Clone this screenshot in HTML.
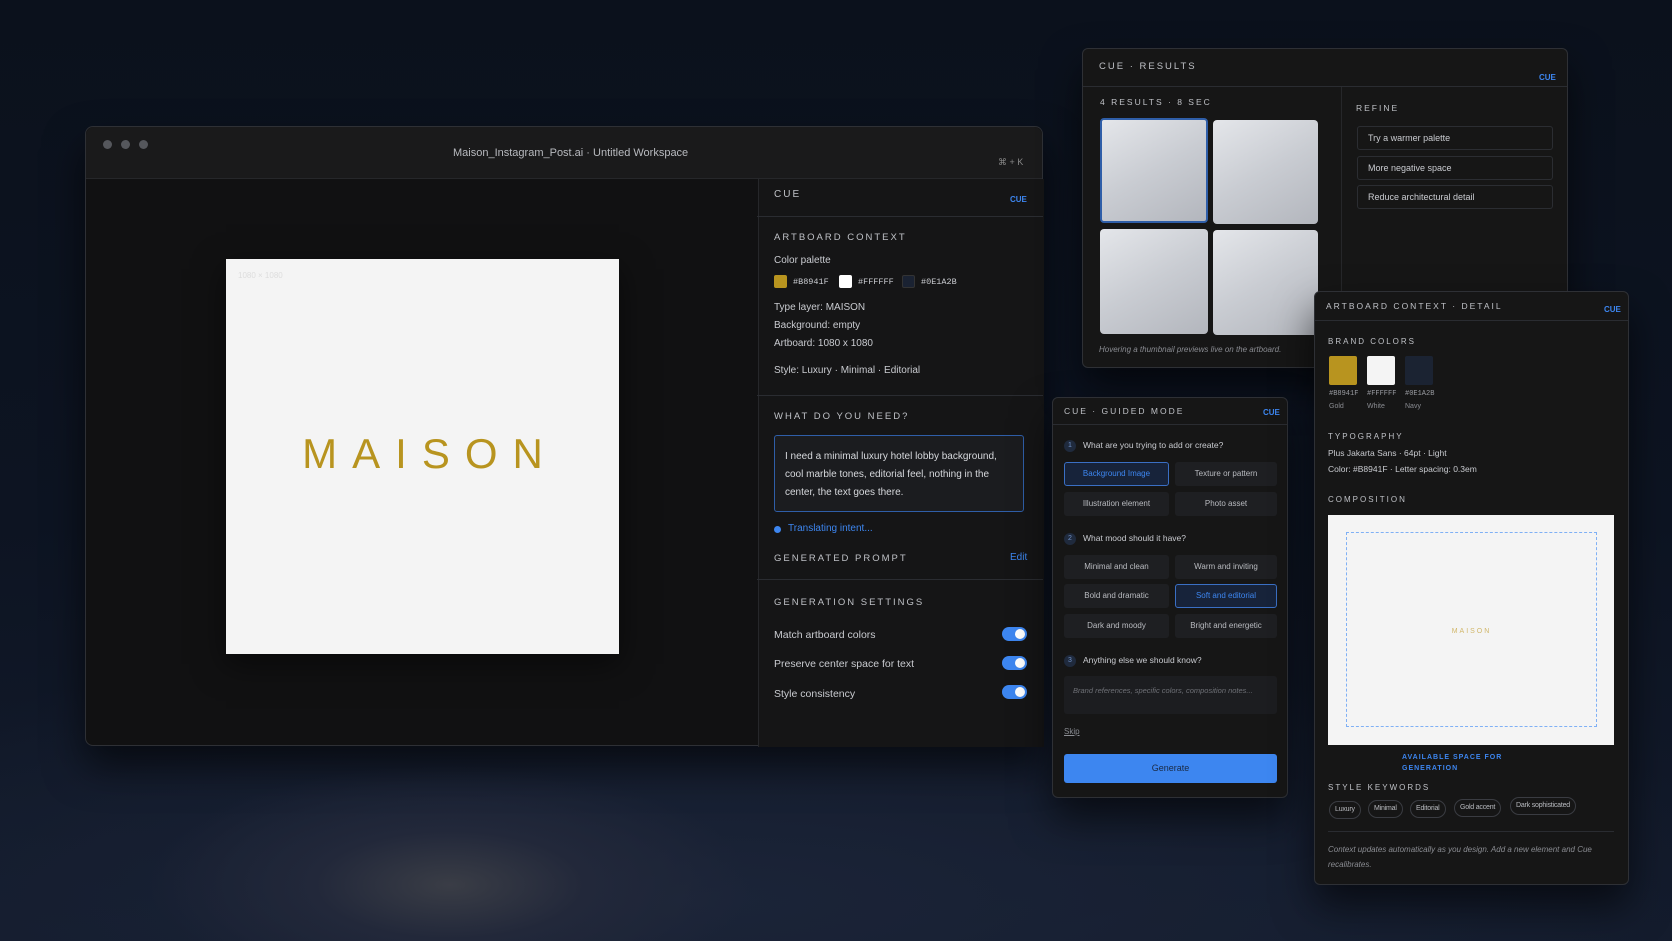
<!DOCTYPE html>
<html><head><meta charset="utf-8"><style>
*{box-sizing:border-box;margin:0;padding:0}
body{width:1672px;height:941px;overflow:hidden;position:relative;font-family:"Liberation Sans","DejaVu Sans",sans-serif;
background:radial-gradient(ellipse 300px 120px at 450px 885px,#3a3d46 0%,#22283a 45%,rgba(20,28,46,0) 100%),
radial-gradient(ellipse 1100px 260px at 700px 900px,#1b2438 0%,rgba(14,20,34,0) 100%),
linear-gradient(180deg,#0b111c 0%,#0d1422 55%,#131b2c 100%);}
.a{position:absolute}
.panel{position:absolute;background:#161616;border:1px solid #2e3035;border-radius:6px;box-shadow:0 20px 40px rgba(0,0,0,.6)}
.cap{position:absolute;font-size:10px;letter-spacing:2px;color:#bfc1c6}
.cue{position:absolute;font-size:8px;color:#3d86f0;font-weight:bold}
.t{position:absolute;font-size:10.5px;color:#c9cbd0;white-space:nowrap}
.hr{position:absolute;height:1px;background:#2a2c31}
.btn{position:absolute;background:#1e1f22;border-radius:3px;font-size:8px;color:#b9bbc0;text-align:center;line-height:23px}
.sel{background:#17233a;border:1px solid #3a6fc4;color:#3d86f0;line-height:21px}
.tog{position:absolute;width:25px;height:14px;border-radius:7px;background:#3d86f0}
.tog:after{content:"";position:absolute;right:2px;top:2px;width:10px;height:10px;border-radius:5px;background:#fff}
.thumb{position:absolute;border-radius:4px;background:linear-gradient(150deg,#e4e6ea 0%,#c9ccd2 50%,#b3b6bd 100%)}
.ref{position:absolute;left:1357px;width:196px;height:24px;border:1px solid #2b2d32;border-radius:3px;font-size:9px;color:#c9cbd0;padding-left:10px;line-height:22px}
.chip{position:absolute;top:800px;height:18px;border:1px solid #3a3c42;border-radius:9px;font-size:7px;color:#b9bbc0;line-height:16px;padding:0 5px;white-space:nowrap;letter-spacing:-0.2px}
.q{position:absolute;width:12px;height:12px;border-radius:6px;background:#1f2a3d;color:#6f8fc4;font-size:7px;text-align:center;line-height:12px}
</style></head><body>

<div class="panel" style="left:85px;top:126px;width:958px;height:620px;background:#111112;border-radius:8px">
  <div class="a" style="left:0;top:0;width:100%;height:52px;background:#1a1a1b;border-bottom:1px solid #26272a;border-radius:8px 8px 0 0"></div>
  <div class="a" style="left:17px;top:13px;width:9px;height:9px;border-radius:5px;background:#55575c"></div>
  <div class="a" style="left:35px;top:13px;width:9px;height:9px;border-radius:5px;background:#55575c"></div>
  <div class="a" style="left:53px;top:13px;width:9px;height:9px;border-radius:5px;background:#55575c"></div>
  <div class="t" style="left:367px;top:20px;color:#b8babf;font-size:11px">Maison_Instagram_Post.ai · Untitled Workspace</div>
  <div class="t" style="left:912px;top:30px;color:#888;font-size:9px">⌘ + K</div>
  <div class="a" style="left:672px;top:52px;width:1px;height:568px;background:#26272a"></div>
  <div class="a" style="left:673px;top:52px;width:285px;height:568px;background:#151516"></div>
</div>
<div class="a" style="left:226px;top:259px;width:393px;height:395px;background:#f4f4f4;box-shadow:0 10px 30px rgba(0,0,0,.5)"></div>
<div class="t" style="left:238px;top:271px;font-size:8px;color:#ddd">1080 × 1080</div>
<div class="a" style="left:226px;top:430px;width:393px;text-align:center;font-size:42px;letter-spacing:15px;color:#b8941f;padding-left:15px;font-weight:300">MAISON</div>

<div class="cap" style="left:774px;top:189px">CUE</div>
<div class="cue" style="left:1010px;top:195px">CUE</div>
<div class="hr" style="left:757px;top:216px;width:286px"></div>
<div class="cap" style="left:774px;top:232px;font-size:9.5px">ARTBOARD CONTEXT</div>
<div class="t" style="left:774px;top:255px;font-size:10px">Color palette</div>
<div class="a" style="left:774px;top:275px;width:13px;height:13px;background:#b8941f;border-radius:2px"></div>
<div class="t" style="left:793px;top:277px;font-size:8.5px;font-family:'Liberation Mono',monospace">#B8941F</div>
<div class="a" style="left:839px;top:275px;width:13px;height:13px;background:#fff;border-radius:2px"></div>
<div class="t" style="left:858px;top:277px;font-size:8.5px;font-family:'Liberation Mono',monospace">#FFFFFF</div>
<div class="a" style="left:902px;top:275px;width:13px;height:13px;background:#1a2232;border:1px solid #333;border-radius:2px"></div>
<div class="t" style="left:921px;top:277px;font-size:8.5px;font-family:'Liberation Mono',monospace">#0E1A2B</div>
<div class="t" style="left:774px;top:302px;font-size:10px">Type layer: MAISON</div>
<div class="t" style="left:774px;top:320px;font-size:10px">Background: empty</div>
<div class="t" style="left:774px;top:338px;font-size:10px">Artboard: 1080 x 1080</div>
<div class="t" style="left:774px;top:365px;font-size:10px">Style: Luxury · Minimal · Editorial</div>
<div class="hr" style="left:757px;top:395px;width:286px"></div>
<div class="cap" style="left:774px;top:411px;font-size:9.5px">WHAT DO YOU NEED?</div>
<div class="a" style="left:774px;top:435px;width:250px;height:77px;border:1px solid #2f5ea8;border-radius:3px;background:#1b1c1f;padding:12px 10px;font-size:10px;line-height:18px;color:#d7d9dd">I need a minimal luxury hotel lobby background, cool marble tones, editorial feel, nothing in the center, the text goes there.</div>
<div class="a" style="left:774px;top:526px;width:7px;height:7px;border-radius:4px;background:#3d86f0"></div>
<div class="t" style="left:788px;top:523px;color:#3d86f0;font-size:10px">Translating intent...</div>
<div class="cap" style="left:774px;top:553px;font-size:9.5px">GENERATED PROMPT</div>
<div class="t" style="left:1010px;top:552px;color:#3d86f0;font-size:10px">Edit</div>
<div class="hr" style="left:757px;top:579px;width:286px"></div>
<div class="cap" style="left:774px;top:597px;font-size:9.5px">GENERATION SETTINGS</div>
<div class="t" style="left:774px;top:629px">Match artboard colors</div><div class="tog" style="left:1002px;top:627px"></div>
<div class="t" style="left:774px;top:658px">Preserve center space for text</div><div class="tog" style="left:1002px;top:656px"></div>
<div class="t" style="left:774px;top:688px">Style consistency</div><div class="tog" style="left:1002px;top:685px"></div>

<div class="panel" style="left:1082px;top:48px;width:486px;height:320px"></div>
<div class="cap" style="left:1099px;top:61px;font-size:9.5px">CUE · RESULTS</div>
<div class="cue" style="left:1539px;top:73px">CUE</div>
<div class="hr" style="left:1083px;top:86px;width:484px"></div>
<div class="a" style="left:1341px;top:87px;width:1px;height:280px;background:#26272a"></div>
<div class="cap" style="left:1100px;top:97px;font-size:8.5px">4 RESULTS · 8 SEC</div>
<div class="cap" style="left:1356px;top:103px;font-size:8.5px">REFINE</div>
<div class="thumb" style="left:1100px;top:118px;width:108px;height:105px;border:2px solid #2f5ea8"></div>
<div class="thumb" style="left:1213px;top:120px;width:105px;height:104px"></div>
<div class="thumb" style="left:1100px;top:229px;width:108px;height:105px"></div>
<div class="thumb" style="left:1213px;top:230px;width:105px;height:105px"></div>
<div class="t" style="left:1099px;top:345px;font-size:8px;font-style:italic;color:#8a8c92">Hovering a thumbnail previews live on the artboard.</div>
<div class="ref" style="top:126px">Try a warmer palette</div>
<div class="ref" style="top:156px">More negative space</div>
<div class="ref" style="top:185px">Reduce architectural detail</div>

<div class="panel" style="left:1052px;top:397px;width:236px;height:401px"></div>
<div class="cap" style="left:1064px;top:406px;font-size:8.5px">CUE · GUIDED MODE</div>
<div class="cue" style="left:1263px;top:408px">CUE</div>
<div class="hr" style="left:1053px;top:424px;width:234px"></div>
<div class="q" style="left:1064px;top:440px">1</div><div class="t" style="left:1083px;top:440px;font-size:8.5px">What are you trying to add or create?</div>
<div class="btn sel" style="left:1064px;top:462px;width:105px;height:24px">Background Image</div>
<div class="btn" style="left:1175px;top:462px;width:102px;height:24px">Texture or pattern</div>
<div class="btn" style="left:1064px;top:492px;width:105px;height:24px">Illustration element</div>
<div class="btn" style="left:1175px;top:492px;width:102px;height:24px">Photo asset</div>
<div class="q" style="left:1064px;top:533px">2</div><div class="t" style="left:1083px;top:533px;font-size:8.5px">What mood should it have?</div>
<div class="btn" style="left:1064px;top:555px;width:105px;height:24px">Minimal and clean</div>
<div class="btn" style="left:1175px;top:555px;width:102px;height:24px">Warm and inviting</div>
<div class="btn" style="left:1064px;top:584px;width:105px;height:24px">Bold and dramatic</div>
<div class="btn sel" style="left:1175px;top:584px;width:102px;height:24px">Soft and editorial</div>
<div class="btn" style="left:1064px;top:614px;width:105px;height:24px">Dark and moody</div>
<div class="btn" style="left:1175px;top:614px;width:102px;height:24px">Bright and energetic</div>
<div class="q" style="left:1064px;top:655px">3</div><div class="t" style="left:1083px;top:655px;font-size:8.5px">Anything else we should know?</div>
<div class="a" style="left:1064px;top:676px;width:213px;height:38px;background:#1c1d20;border-radius:3px;font-size:7.5px;font-style:italic;color:#6e7076;padding:10px 9px">Brand references, specific colors, composition notes...</div>
<div class="t" style="left:1064px;top:727px;font-size:8px;color:#8a8c92;text-decoration:underline">Skip</div>
<div class="a" style="left:1064px;top:754px;width:213px;height:29px;background:#3d86f0;border-radius:3px;font-size:9px;color:#1a2a44;text-align:center;line-height:29px">Generate</div>

<div class="panel" style="left:1314px;top:291px;width:315px;height:594px"></div>
<div class="cap" style="left:1326px;top:301px;font-size:8.5px">ARTBOARD CONTEXT · DETAIL</div>
<div class="cue" style="left:1604px;top:305px">CUE</div>
<div class="hr" style="left:1315px;top:320px;width:313px"></div>
<div class="cap" style="left:1328px;top:337px;font-size:8px">BRAND COLORS</div>
<div class="a" style="left:1329px;top:356px;width:28px;height:29px;background:#b8941f;border-radius:2px"></div>
<div class="a" style="left:1367px;top:356px;width:28px;height:29px;background:#f4f4f4;border-radius:2px"></div>
<div class="a" style="left:1405px;top:356px;width:28px;height:29px;background:#1b2332;border-radius:2px"></div>
<div class="t" style="left:1329px;top:390px;font-size:7px;color:#9a9ca2;font-family:'Liberation Mono',monospace">#B8941F</div>
<div class="t" style="left:1367px;top:390px;font-size:7px;color:#9a9ca2;font-family:'Liberation Mono',monospace">#FFFFFF</div>
<div class="t" style="left:1405px;top:390px;font-size:7px;color:#9a9ca2;font-family:'Liberation Mono',monospace">#0E1A2B</div>
<div class="t" style="left:1329px;top:403px;font-size:7px;color:#8a8c92">Gold</div>
<div class="t" style="left:1367px;top:403px;font-size:7px;color:#8a8c92">White</div>
<div class="t" style="left:1405px;top:403px;font-size:7px;color:#8a8c92">Navy</div>
<div class="cap" style="left:1328px;top:432px;font-size:8px">TYPOGRAPHY</div>
<div class="t" style="left:1328px;top:448px;font-size:8.5px">Plus Jakarta Sans · 64pt · Light</div>
<div class="t" style="left:1328px;top:464px;font-size:8.5px">Color: #B8941F · Letter spacing: 0.3em</div>
<div class="cap" style="left:1328px;top:495px;font-size:8px">COMPOSITION</div>
<div class="a" style="left:1328px;top:515px;width:286px;height:230px;background:#f4f4f4"></div>
<div class="a" style="left:1346px;top:532px;width:251px;height:195px;border:1.5px dashed #7fb0f5"></div>
<div class="a" style="left:1346px;top:628px;width:251px;text-align:center;font-size:7px;letter-spacing:2px;color:#d1b76a">MAISON</div>
<div class="a" style="left:1402px;top:752px;font-size:7px;letter-spacing:1px;color:#3d86f0;font-weight:bold;line-height:11px">AVAILABLE SPACE FOR<br>GENERATION</div>
<div class="cap" style="left:1328px;top:783px;font-size:8px">STYLE KEYWORDS</div>
<div class="chip" style="left:1329px;top:801px">Luxury</div>
<div class="chip" style="left:1368px">Minimal</div>
<div class="chip" style="left:1410px">Editorial</div>
<div class="chip" style="left:1454px;top:799px">Gold accent</div>
<div class="chip" style="left:1510px;top:797px">Dark sophisticated</div>
<div class="hr" style="left:1328px;top:831px;width:286px"></div>
<div class="a" style="left:1328px;top:842px;width:280px;font-size:8px;font-style:italic;color:#8a8c92;line-height:15px">Context updates automatically as you design. Add a new element and Cue recalibrates.</div>
</body></html>
